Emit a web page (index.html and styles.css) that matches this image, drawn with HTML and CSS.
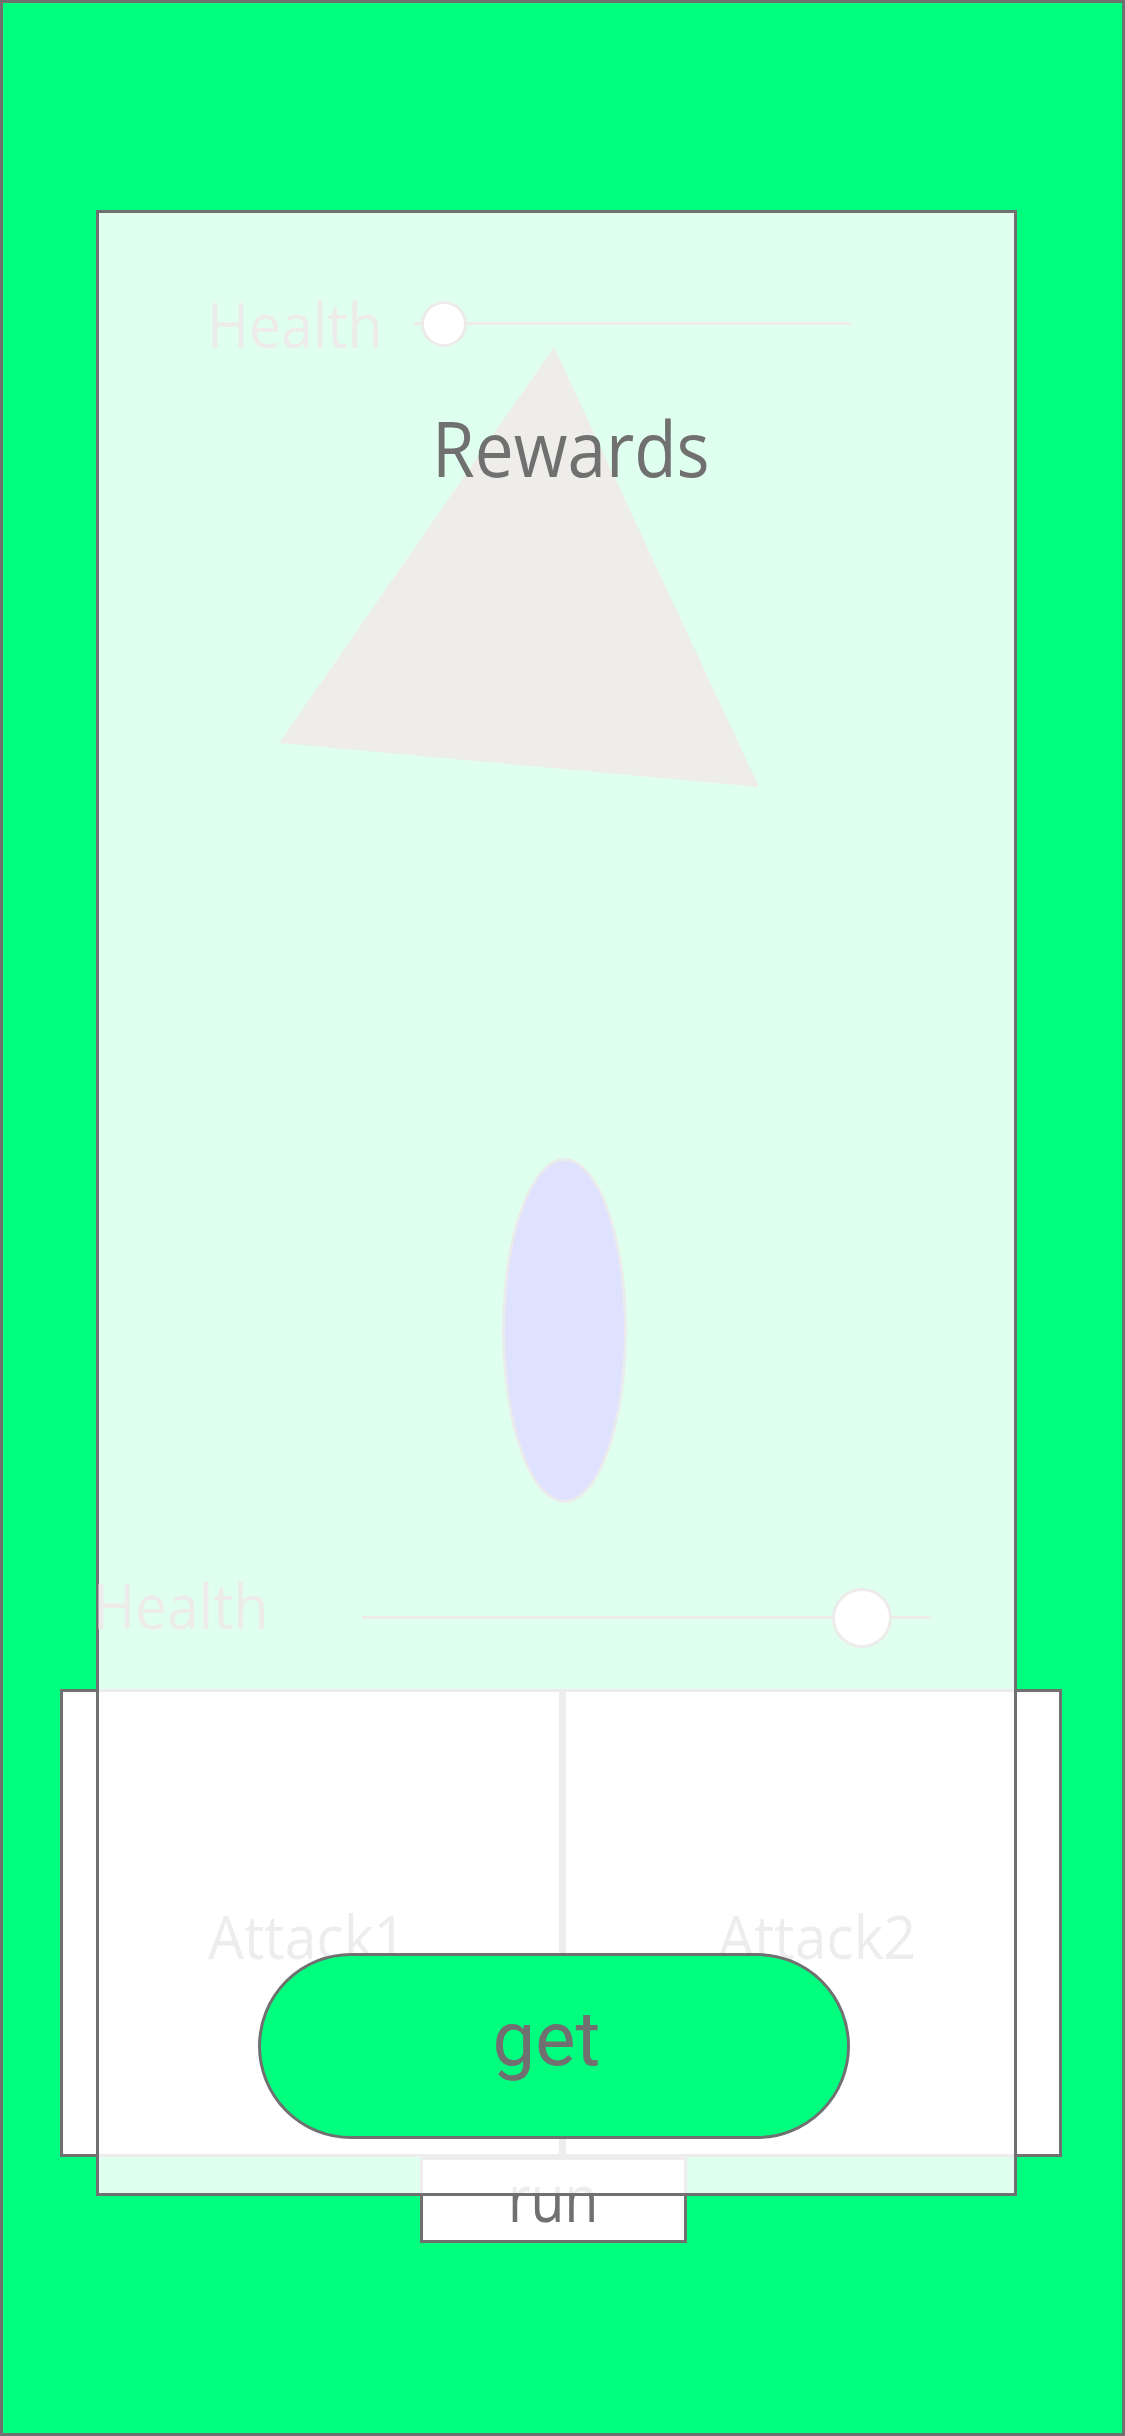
FILE: index.html
```html
<!DOCTYPE html>
<html lang="en">
<head>
<meta charset="utf-8">
<title>Rewards</title>
<link rel="stylesheet" href="styles.css">
</head>
<body>
<div class="screen">
  <div class="actions">
    <div class="action-cell action-left"><span class="label label-attack">Attack1</span></div>
    <div class="action-divider"></div>
    <div class="action-cell action-right"><span class="label label-attack">Attack2</span></div>
  </div>
  <div class="run-box"><span class="label label-run">run</span></div>

  <div class="panel"></div>

  <span class="label label-health health-top">Health</span>
  <div class="slider slider-top"><span class="thumb thumb-top"></span></div>

  <svg class="triangle" width="480" height="440" viewBox="0 0 480 440">
    <polygon points="275,0 0,396 480,440" fill="#EEEDE9"/>
  </svg>

  <h1 class="label label-rewards">Rewards</h1>

  <div class="ellipse"></div>

  <span class="label label-health health-bottom">Health</span>
  <div class="slider slider-bottom"><span class="thumb thumb-bottom"></span></div>

  <button class="get-button"><span class="label label-get">get</span></button>
</div>
</body>
</html>
```

FILE: styles.css
```css
* { box-sizing: border-box; }
html, body { margin: 0; padding: 0; }
body {
  width: 1125px;
  height: 2436px;
  font-family: "Open Sans", "Noto Sans", sans-serif;
  background: #00FF7F;
}
.screen {
  position: relative;
  width: 1125px;
  height: 2436px;
  background: #00FF7F;
  overflow: hidden;
}
.screen::after {
  content: "";
  position: absolute;
  inset: 0;
  border: 3px solid #707070;
  pointer-events: none;
  z-index: 10;
}

.label {
  display: inline-block;
  line-height: 1;
  white-space: nowrap;
  font-weight: 400;
  margin: 0;
  transform-origin: left center;
}

/* bottom action box */
.actions {
  position: absolute;
  left: 60px;
  top: 1689px;
  width: 1002px;
  height: 468px;
  background: #fff;
  border: 3px solid #707070;
  display: grid;
  grid-template-columns: 496px 7px 1fr;
  z-index: 1;
}
.action-cell {
  display: flex;
  flex-direction: column;
  padding-top: 214px;
}
.action-left { padding-left: 145px; }
.action-right { padding-left: 152px; }
.action-divider { background: #707070; }
.label-attack {
  font-size: 60px;
  color: #707070;
  transform: scaleX(0.95);
}

.run-box {
  position: absolute;
  left: 420px;
  top: 2157px;
  width: 267px;
  height: 86px;
  background: #fff;
  border: 3px solid #707070;
  display: flex;
  justify-content: center;
  padding-top: 5px;
  z-index: 1;
}
.label-run {
  font-size: 65px;
  color: #707070;
  transform: scaleX(0.85);
  transform-origin: center center;
}

/* translucent panel */
.panel {
  position: absolute;
  left: 96px;
  top: 210px;
  width: 921px;
  height: 1986px;
  background: rgba(255, 255, 255, 0.875);
  border: 3px solid #707070;
  z-index: 2;
}

.label-health {
  position: absolute;
  font-size: 62px;
  color: #EEEBEB;
  transform: scaleX(0.92);
  z-index: 3;
}
.health-top { left: 207px; top: 293px; }
.health-bottom { left: 93px; top: 1574px; }

.slider {
  position: absolute;
  z-index: 3;
}
.slider::before {
  content: "";
  position: absolute;
  left: 0;
  right: 0;
  top: 50%;
  height: 3px;
  margin-top: -2px;
  background: #EEEBEB;
}
.slider-top { left: 414px; top: 301px; width: 437px; height: 46px; }
.slider-bottom { left: 362px; top: 1588px; width: 569px; height: 60px; }
.thumb {
  position: absolute;
  top: 0;
  border-radius: 50%;
  background: #fff;
  border: 3px solid #EEEBEB;
}
.thumb-top { left: 7px; width: 46px; height: 46px; }
.thumb-bottom { left: 470px; width: 60px; height: 60px; }

.triangle {
  position: absolute;
  left: 279px;
  top: 347px;
  z-index: 3;
}

.label-rewards {
  position: absolute;
  left: 432px;
  top: 409px;
  font-size: 77px;
  color: #707070;
  transform: scaleX(0.9);
  z-index: 4;
}

.ellipse {
  position: absolute;
  left: 502px;
  top: 1158px;
  width: 125px;
  height: 345px;
  border-radius: 50%;
  background: #DEE2FF;
  border: 3px solid #EBEBEB;
  z-index: 3;
}

.get-button {
  position: absolute;
  left: 258px;
  top: 1953px;
  width: 592px;
  height: 186px;
  border-radius: 93px;
  background: #00FF7F;
  border: 3px solid #707070;
  padding: 0 15px 0 0;
  margin: 0;
  font-family: inherit;
  display: flex;
  align-items: center;
  justify-content: center;
  z-index: 5;
}
.label-get {
  font-family: Roboto, "DejaVu Sans", sans-serif;
  font-size: 76px;
  color: #707070;
  margin-top: -14px;
}
```
